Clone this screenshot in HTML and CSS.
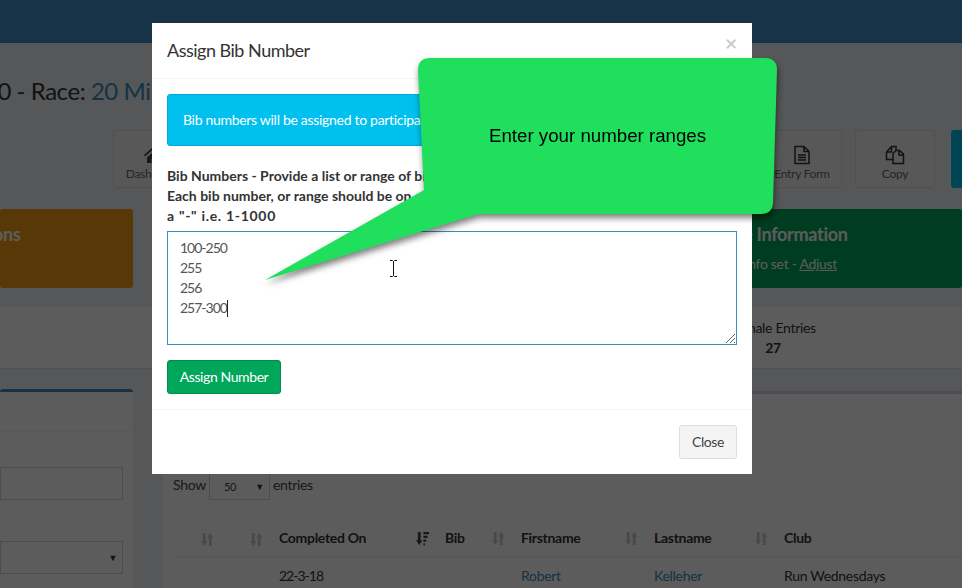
FILE: index.html
```html
<!DOCTYPE html>
<html lang="en">
<head>
    <meta charset="UTF-8">
    <title>Assign Bib Number</title>
    <link rel="stylesheet" href="styles.css">
</head>
<body>
    <svg class="defs" width="0" height="0">
        <symbol id="sort" viewBox="0 0 14 16">
            <path d="M2 1h3v9h2l-3.500 5L0 10h2zM10 1l3.500 5h-2v9h-3V6h-2z"/>
        </symbol>
        <symbol id="sort-desc" viewBox="0 0 14 16">
            <path d="M2 1h3v9h2l-3.500 5L0 10h2zM8 1h6v2.500H8zM8 5h4.500v2.500H8zM8 9h3v2.500H8zM8 13h1.500v2.500H8z"/>
        </symbol>
    </svg>

    <header class="topbar"></header>

    <main class="content">
        <h1 class="page-title">2020 - Race: <a href="#">20 Miles</a></h1>

        <div class="toolbar">
            <a class="app-btn" href="#">
                <svg class="app-icon" viewBox="0 0 20 20"><path d="M10 2 1 10l1 1.500 8-7 8 7 1-1.500-3-2.700V3h-2.500v2zM4 12.500V18h4.500v-4.500h3V18H16v-5.500l-6-5.300z"/></svg>
                Dashboard
            </a>
            <a class="app-btn push" href="#">
                <svg class="app-icon line" viewBox="0 0 20 20"><path d="M3 1.500h9l5 5v12H3zM12 1.500v5h5M6 10h8M6 12.500h8M6 15h8"/></svg>
                Entry Form
            </a>
            <a class="app-btn" href="#">
                <svg class="app-icon line" viewBox="0 0 20 20"><path d="M6.500 1.500H11v4L8 8.500v6H1.500V7zM6.500 1.500V7H1.500M11 5.500h3.500L18.500 9v9.500H8V8.500zM14 5.500V10h4.500"/></svg>
                Copy
            </a>
            <a class="app-btn solid" href="#"></a>
        </div>

        <section class="info-row">
            <div class="info-box orange"><h3>Notifications</h3></div>
            <div class="info-box green">
                <h3>Race Information</h3>
                <p>No info set - <a href="#">Adjust</a></p>
            </div>
        </section>

        <section class="stats">
            <div class="stat">
                <span>Female Entries</span>
                <strong>27</strong>
            </div>
        </section>

        <section class="panels">
            <div class="box filters">
                <div class="box-head"></div>
                <div class="field"></div>
                <div class="field select-field"><span class="arrow">&#9660;</span></div>
            </div>
            <div class="box entries">
                <div class="length">
                    Show
                    <span class="length-select">50 <span class="arrow">&#9660;</span></span>
                    entries
                </div>
                <table class="entry-table">
                    <colgroup>
                        <col class="c-narrow"><col class="c-narrow"><col class="c-date"><col class="c-bib"><col class="c-first"><col class="c-last"><col>
                    </colgroup>
                    <thead>
                        <tr>
                            <th><svg class="sort-icon"><use href="#sort"/></svg></th>
                            <th><svg class="sort-icon"><use href="#sort"/></svg></th>
                            <th>Completed On<svg class="sort-icon active"><use href="#sort-desc"/></svg></th>
                            <th>Bib<svg class="sort-icon"><use href="#sort"/></svg></th>
                            <th>Firstname<svg class="sort-icon"><use href="#sort"/></svg></th>
                            <th>Lastname<svg class="sort-icon"><use href="#sort"/></svg></th>
                            <th>Club</th>
                        </tr>
                    </thead>
                    <tbody>
                        <tr>
                            <td></td>
                            <td></td>
                            <td class="digits">22-3-18</td>
                            <td></td>
                            <td><a href="#">Robert</a></td>
                            <td><a href="#">Kelleher</a></td>
                            <td>Run Wednesdays</td>
                        </tr>
                    </tbody>
                </table>
            </div>
        </section>
    </main>

    <div class="backdrop">
        <div class="modal">
            <div class="modal-header">
                <h4>Assign Bib Number</h4>
                <span class="close-x">&times;</span>
            </div>
            <div class="modal-body">
                <div class="alert">Bib numbers will be assigned to participants in the order of entry</div>
                <label class="bib-label">Bib Numbers - Provide a list or range of bib numbers.<br>Each bib number, or range should be on a new line. Ranges use<br><span class="bib-example">a "-" i.e. 1-1000</span></label>
                <div class="bib-input"><span class="digits">100-250
255
256
257-300</span><span class="caret"></span><svg class="grip" viewBox="0 0 9 9"><path d="M0 9 9 0M4 9l5-5M8 9l1-1"/></svg></div>
                <button class="btn-assign">Assign Number</button>
            </div>
            <div class="modal-footer">
                <button class="btn-close">Close</button>
            </div>
        </div>
    </div>

    <!-- annotation drawn on top of the screenshot -->
    <div class="callout">
        <svg class="callout-shape" viewBox="255 50 530 240">
            <path d="M430 58H765Q777 58 777 70L773 203Q772 214 761 214H478L265 280L424 190L418 70Q418 58 430 58Z"/>
        </svg>
        <span class="callout-text">Enter your number ranges</span>
    </div>
    <svg class="ibeam" viewBox="0 0 9 17"><path d="M1 .5h2.500L4.500 1.500 5.500.5H8M4.500 1.500v14M1 16.500h2.500l1-1 1 1H8"/></svg>
</body>
</html>
```

FILE: styles.css
```css
html, body {
    height: 100%;
    margin: 0;
    overflow: hidden;
}
body {
    background-color: #ecf0f5;
    color: #333;
    font-family: Lato, "Noto Sans", Arial, sans-serif;
    font-size: 14px;
    line-height: 20px;
    letter-spacing: -.3px;
}
a {
    color: #3c8dbc;
    text-decoration: none;
}
.defs {
    display: block;
}
.digits {
    letter-spacing: -1px;
}

/* page behind the modal */
.topbar {
    height: 43px;
    background-color: #3f8ec5;
}
.page-title {
    margin: 31px 0 0 -43px;
    font-size: 24px;
    line-height: 34px;
    font-weight: 400;
    letter-spacing: -.45px;
    white-space: nowrap;
}
.toolbar {
    display: flex;
    gap: 13px;
    height: 58px;
    margin: 22px -69px 0 113px;
}
.app-btn {
    display: flex;
    flex: none;
    flex-direction: column;
    align-items: center;
    box-sizing: border-box;
    width: 80px;
    padding-top: 14px;
    background-color: #f4f4f4;
    border: 1px solid #ddd;
    border-radius: 3px;
    color: #666;
    font-size: 12px;
    line-height: 16px;
}
.app-btn.push {
    margin-left: auto;
}
.app-btn.solid {
    margin-left: 3px;
    background-color: #00c0ef;
    border-color: #00c0ef;
}
.app-icon {
    width: 20px;
    height: 20px;
    margin-bottom: 1px;
    fill: #444;
}
.app-icon.line {
    fill: none;
    stroke: #333;
    stroke-width: 1.500;
}
.info-row {
    display: flex;
    justify-content: space-between;
    height: 79px;
    margin-top: 21px;
}
.info-box {
    box-sizing: border-box;
    padding-top: 13px;
    border-radius: 3px;
    color: #fff;
}
.info-box h3 {
    margin: 0;
    font-size: 18px;
    line-height: 25px;
    font-weight: 700;
    white-space: nowrap;
}
.info-box p {
    margin: 7px 0 0;
    white-space: nowrap;
}
.info-box a {
    color: #fff;
    text-decoration: underline;
}
.orange {
    width: 133px;
    background-color: #f39c12;
}
.orange h3 {
    text-indent: -79px;
}
.green {
    width: 240px;
    background-color: #00a65a;
}
.green h3 {
    text-indent: -7px;
}
.green p {
    text-indent: 2px;
}
.stats {
    display: flex;
    box-sizing: border-box;
    height: 62px;
    margin-top: 19px;
    padding: 11px 0 0 722px;
    background-color: #fff;
    border-bottom: 1px solid #e4e4e4;
}
.stat {
    display: flex;
    flex-direction: column;
    align-items: center;
    width: 102px;
    white-space: nowrap;
}
.panels {
    display: flex;
    gap: 30px;
    margin-top: 20px;
}
.box {
    box-sizing: border-box;
    height: 200px;
    background-color: #fff;
    border-top: 3px solid #d2d6de;
}
.filters {
    flex: none;
    width: 133px;
    border-top-color: #3c8dbc;
    border-radius: 3px 3px 0 0;
    box-shadow: 0 1px 1px rgba(0, 0, 0, .1);
}
.box-head {
    height: 39px;
    border-bottom: 1px solid #f4f4f4;
}
.field {
    position: relative;
    box-sizing: border-box;
    height: 33px;
    margin: 35px 10px 0 0;
    border: 1px solid #d2d6de;
}
.select-field {
    margin-top: 41px;
}
.arrow {
    color: #333;
    font-size: 9px;
}
.select-field .arrow {
    position: absolute;
    right: 5px;
    top: 6px;
}
.entries {
    flex: 1;
    padding: 81px 0 0 10px;
    margin-top: 2px;
}
.length {
    display: flex;
    align-items: flex-start;
    gap: 3px;
    height: 59px;
    color: #444;
    font-size: 14px;
}
.length-select {
    display: flex;
    justify-content: space-between;
    box-sizing: border-box;
    width: 61px;
    height: 34px;
    margin-top: -9px;
    padding: 10px 5px 0 14px;
    border: 1px solid #d2d6de;
    font-size: 11px;
}
.entry-table {
    width: 789px;
    margin-top: -15px;
    table-layout: fixed;
    border-collapse: collapse;
}
.c-narrow { width: 49px; }
.c-date { width: 166px; }
.c-bib { width: 76px; }
.c-first { width: 133px; }
.c-last { width: 130px; }
.entry-table th, .entry-table td {
    padding: 8px;
    text-align: left;
    white-space: nowrap;
}
.entry-table th {
    height: 21px;
    border-bottom: 2px solid #f4f4f4;
}
.sort-icon {
    float: right;
    width: 13px;
    height: 15px;
    margin-top: 3px;
    fill: #333;
    opacity: .25;
}
.sort-icon.active {
    opacity: 1;
    fill: #444;
}

/* modal */
.backdrop {
    position: fixed;
    inset: 0;
    background-color: rgba(0, 0, 0, .64);
}
.modal {
    width: 600px;
    margin: 23px 0 0 152px;
    background-color: #fff;
}
.modal-header {
    display: flex;
    justify-content: space-between;
    height: 25px;
    padding: 15px;
    border-bottom: 1px solid #f4f4f4;
}
.modal-header h4 {
    margin: 0;
    font-size: 18px;
    line-height: 25px;
    font-weight: 400;
    letter-spacing: -.5px;
}
.close-x {
    margin-top: -5px;
    color: #ccc;
    font-size: 21px;
    font-weight: 700;
}
.modal-body {
    padding: 15px;
}
.alert {
    margin-bottom: 20px;
    padding: 15px;
    background-color: #00c0ef;
    border: 1px solid #00acd6;
    border-radius: 3px;
    color: #fff;
}
.bib-label {
    display: block;
    margin-bottom: 5px;
    font-weight: 700;
    letter-spacing: 0;
    white-space: nowrap;
}
.bib-example {
    letter-spacing: .7px;
}
.bib-input {
    position: relative;
    box-sizing: border-box;
    height: 114px;
    margin-bottom: 15px;
    padding: 6px 12px;
    border: 1px solid #3c8dbc;
    color: #555;
    white-space: pre-line;
}
.caret {
    display: inline-block;
    height: 17px;
    vertical-align: -4px;
    border-left: 1px solid #222;
}
.grip {
    position: absolute;
    right: 1px;
    bottom: 1px;
    width: 9px;
    height: 9px;
    fill: none;
    stroke: #666;
    stroke-width: 1;
}
button {
    box-sizing: border-box;
    height: 34px;
    padding: 0 6px;
    border-radius: 3px;
    font: inherit;
    letter-spacing: -.4px;
    white-space: nowrap;
}
.btn-assign {
    display: block;
    width: 114px;
    background-color: #00a65a;
    border: 1px solid #008d4c;
    color: #fff;
}
.modal-footer {
    display: flex;
    justify-content: flex-end;
    padding: 15px;
    border-top: 1px solid #f4f4f4;
}
.btn-close {
    width: 58px;
    background-color: #f4f4f4;
    border: 1px solid #ddd;
    color: #444;
}

/* green callout */
.callout {
    position: absolute;
    left: 255px;
    top: 50px;
    width: 530px;
    height: 240px;
}
.callout-shape {
    display: block;
    width: 530px;
    height: 240px;
    overflow: visible;
    fill: #1fdf5c;
    filter: drop-shadow(1px 4px 3px rgba(0, 0, 0, .5));
}
.callout-text {
    position: absolute;
    left: 234px;
    top: 75px;
    color: #000;
    font-family: "Liberation Sans", Arial, sans-serif;
    font-size: 18.700px;
    line-height: 22px;
    letter-spacing: 0;
    white-space: nowrap;
}
.ibeam {
    position: absolute;
    left: 389px;
    top: 260px;
    width: 9px;
    height: 17px;
    fill: none;
    stroke: #111;
    stroke-width: 1;
}
```
